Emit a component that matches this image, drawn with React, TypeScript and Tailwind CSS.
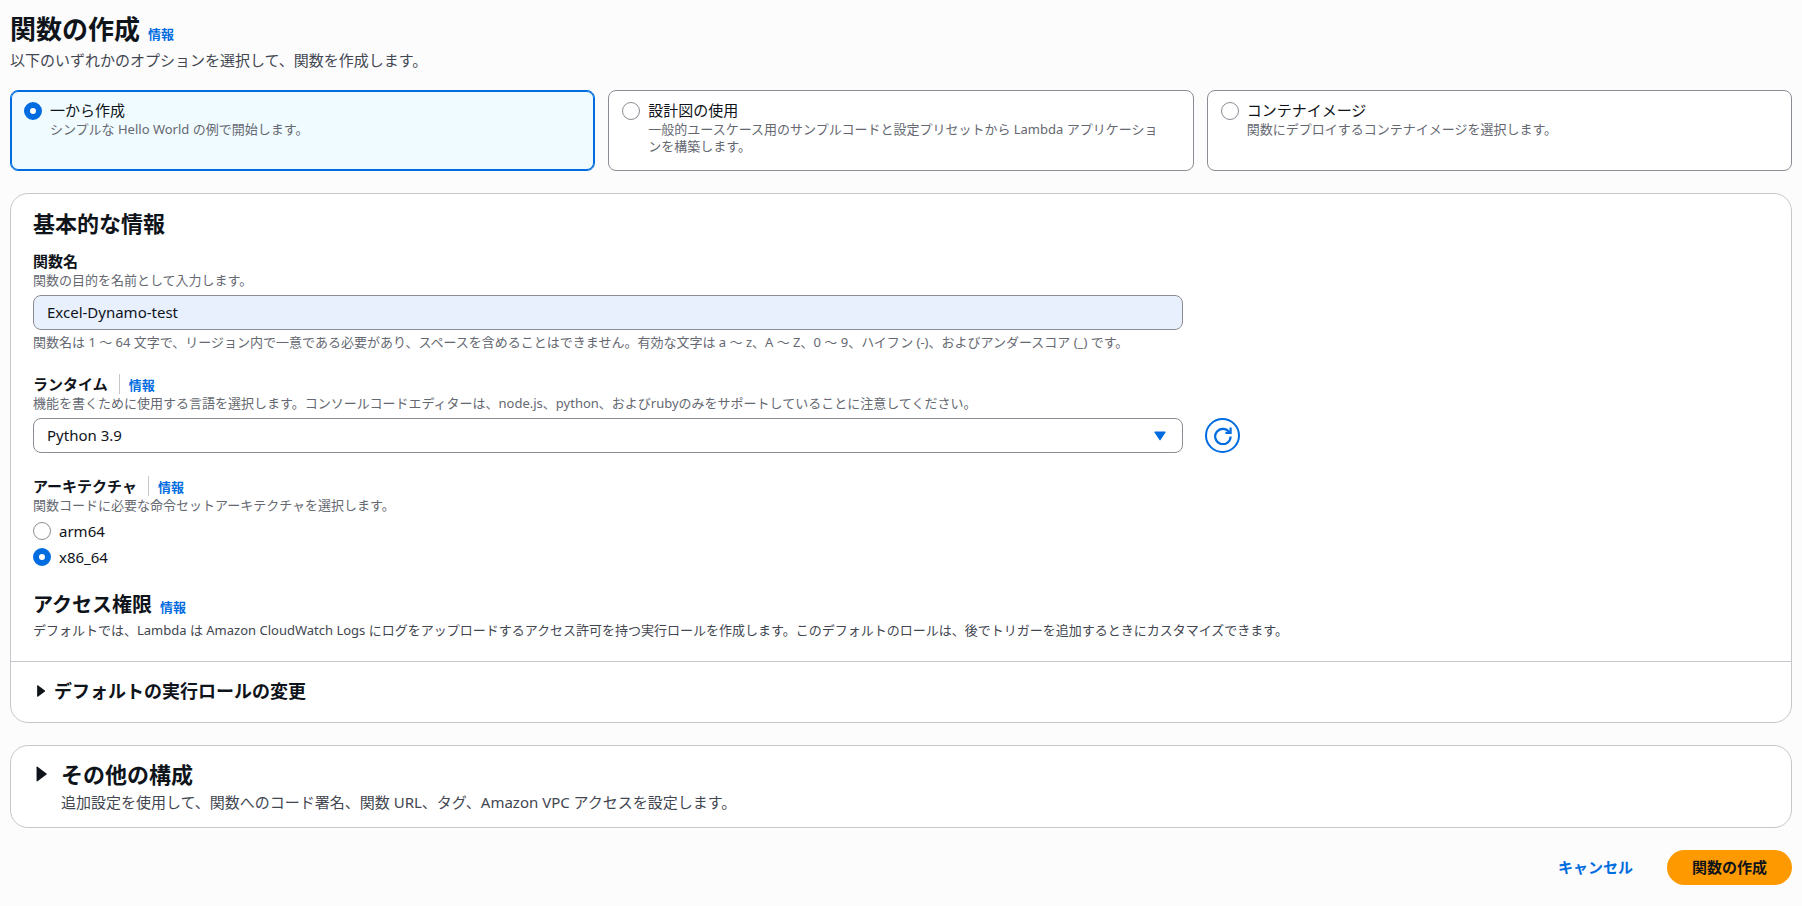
import { useState } from "react";

function InfoLink({ divided = false }: { divided?: boolean }) {
  return (
    <span
      className={
        divided
          ? "ml-[11px] border-l border-[#c6c6cd] pl-[9px] leading-none"
          : "ml-2 text-[13px] leading-none"
      }
    >
      <a href="#info" className="text-[13px] leading-none font-bold text-[#006ce0]">
        情報
      </a>
    </span>
  );
}

function Caret({ className }: { className: string }) {
  return (
    <svg viewBox="0 0 10 14" className={className} fill="currentColor" aria-hidden="true">
      <path d="M0.5 0.8v12.4c0 .5.5.7.9.4l8.1-6.1c.3-.3.3-.7 0-1L1.4.4C1 .1.5.3.5.8z" />
    </svg>
  );
}

const radioClass =
  "h-[18px] w-[18px] shrink-0 appearance-none rounded-full border border-[#8c8c94] bg-white checked:border-[6px] checked:border-[#006ce0]";

export default function App() {
  const options = [
    {
      id: "scratch",
      label: "一から作成",
      description: "シンプルな Hello World の例で開始します。",
    },
    {
      id: "blueprint",
      label: "設計図の使用",
      description:
        "一般的ユースケース用のサンプルコードと設定プリセットから Lambda アプリケーションを構築します。",
    },
    {
      id: "container",
      label: "コンテナイメージ",
      description: "関数にデプロイするコンテナイメージを選択します。",
    },
  ];
  const architectures = ["arm64", "x86_64"];
  const [option, setOption] = useState("scratch");
  const [arch, setArch] = useState("x86_64");
  const [name, setName] = useState("Excel-Dynamo-test");

  return (
    <main
      lang="ja"
      className="min-h-screen bg-[#fcfcfd] px-[10px] pt-3 pb-5 font-['Noto_Sans','Noto_Sans_CJK_JP',sans-serif] text-[15px] leading-[22px] text-[#0f141a]"
    >
      <h1 className="text-[26px] leading-[34px] font-bold">
        関数の作成
        <InfoLink />
      </h1>
      <p className="mt-[3px] text-[#424650]">
        以下のいずれかのオプションを選択して、関数を作成します。
      </p>

      <div className="mt-[19px] grid grid-cols-3 gap-[13px]">
        {options.map((item) => (
          <label
            key={item.id}
            className="flex gap-2 rounded-lg border border-[#8c8c94] bg-white pt-2 pr-6 pb-[15px] pl-[13px] has-checked:border-[#006ce0] has-checked:bg-[#f0fbff] has-checked:inset-ring has-checked:inset-ring-[#006ce0]"
          >
            <input
              type="radio"
              name="option"
              checked={option === item.id}
              onChange={() => setOption(item.id)}
              className={`mt-[3px] ${radioClass}`}
            />
            <span>
              <span className="block">{item.label}</span>
              <span className="block text-[13px] leading-[17px] text-[#656871]">
                {item.description}
              </span>
            </span>
          </label>
        ))}
      </div>

      <section className="mt-[22px] rounded-[18px] border border-[#c6c6cd] bg-white">
        <div className="px-[22px] pt-[15px] pb-[22px]">
          <h2 className="text-[22px] leading-[28px] font-bold">基本的な情報</h2>

          <div className="mt-[13px] grid grid-cols-3 gap-[22px]">
            <div className="col-span-2">
              <label htmlFor="name" className="block font-bold">
                関数名
              </label>
              <p className="text-[13px] leading-[17px] text-[#656871]">
                関数の目的を名前として入力します。
              </p>
              <input
                id="name"
                type="text"
                value={name}
                onChange={(e) => setName(e.target.value)}
                className="mt-[6px] block h-[35px] w-full rounded-lg border border-[#8c8c94] bg-[#e8f0fe] px-[13px] pb-[2px]"
              />
              <p className="mt-[3px] text-[13px] leading-[18px] text-[#656871]">
                関数名は 1 〜 64 文字で、リージョン内で一意である必要があり、スペースを含めることはできません。有効な文字は a 〜 z、A 〜 Z、0 〜 9、ハイフン (-)、およびアンダースコア (_) です。
              </p>
            </div>

            <div className="col-span-2 col-start-1">
              <div className="font-bold">
                <label htmlFor="runtime">ランタイム</label>
                <InfoLink divided />
              </div>
              <p className="text-[13px] leading-[17px] text-[#656871]">
                機能を書くために使用する言語を選択します。コンソールコードエディターは、node.js、python、およびrubyのみをサポートしていることに注意してください。
              </p>
              <div className="relative mt-[6px]">
                <select
                  id="runtime"
                  className="block h-[35px] w-full appearance-none rounded-lg border border-[#8c8c94] bg-white px-[13px] pb-[2px]"
                >
                  <option>Python 3.9</option>
                </select>
                <svg
                  viewBox="0 0 12 10"
                  className="pointer-events-none absolute top-[13px] right-[17px] h-[10px] w-3 text-[#006ce0]"
                  fill="currentColor"
                  aria-hidden="true"
                >
                  <path d="M1 .5h10c.6 0 .8.5.5.9l-5 7.7c-.2.4-.7.4-1 0L.5 1.4C.2 1 .4.5 1 .5z" />
                </svg>
              </div>
            </div>
            <button
              type="button"
              aria-label="更新"
              className="flex h-[35px] w-[35px] items-center justify-center self-end rounded-full border-2 border-[#006ce0] text-[#006ce0]"
            >
              <svg
                viewBox="0 0 18 18"
                className="h-[18px] w-[18px]"
                fill="none"
                stroke="currentColor"
                strokeWidth="2.2"
                aria-hidden="true"
              >
                <path d="M16.6 9.6A7.7 7.7 0 1 1 15.3 5.2" />
                <path d="M11.4 5.9h5.2V.6" />
              </svg>
            </button>
          </div>

          <fieldset className="mt-[22px]">
            <legend className="font-bold">
              アーキテクチャ
              <InfoLink divided />
            </legend>
            <p className="text-[13px] leading-[17px] text-[#656871]">
              関数コードに必要な命令セットアーキテクチャを選択します。
            </p>
            <div className="mt-[6px] flex flex-col gap-1">
              {architectures.map((item) => (
                <label key={item} className="flex items-center gap-2">
                  <input
                    type="radio"
                    name="arch"
                    checked={arch === item}
                    onChange={() => setArch(item)}
                    className={radioClass}
                  />
                  {item}
                </label>
              ))}
            </div>
          </fieldset>

          <h3 className="mt-6 text-[20px] leading-[26px] font-bold">
            アクセス権限
            <InfoLink />
          </h3>
          <p className="mt-[3px] text-[13px] leading-[18px] text-[#424650]">
            デフォルトでは、Lambda は Amazon CloudWatch Logs にログをアップロードするアクセス許可を持つ実行ロールを作成します。このデフォルトのロールは、後でトリガーを追加するときにカスタマイズできます。
          </p>
        </div>

        <div className="border-t border-[#c6c6cd] px-[22px] pt-[17px] pb-[19px]">
          <button
            type="button"
            aria-expanded="false"
            className="flex items-center gap-2 pl-[3px] text-[18px] leading-[24px] font-bold"
          >
            <Caret className="h-3 w-[10px]" />
            デフォルトの実行ロールの変更
          </button>
        </div>
      </section>

      <section className="mt-[22px] rounded-[18px] border border-[#c6c6cd] bg-white px-[22px] py-[14px]">
        <h2>
          <button
            type="button"
            aria-expanded="false"
            className="flex items-center gap-[14px] pl-[3px] text-[22px] leading-[28px] font-bold"
          >
            <Caret className="h-4 w-[11px]" />
            その他の構成
          </button>
        </h2>
        <p className="mt-[3px] pl-7 text-[#424650]">
          追加設定を使用して、関数へのコード署名、関数 URL、タグ、Amazon VPC アクセスを設定します。
        </p>
      </section>

      <div className="mt-[22px] flex justify-end gap-[9px]">
        <button type="button" className="h-[35px] px-[25px] pb-[2px] font-bold text-[#006ce0]">
          キャンセル
        </button>
        <button
          type="button"
          className="h-[35px] rounded-full bg-[#ff9900] px-[25px] pb-[2px] font-bold"
        >
          関数の作成
        </button>
      </div>
    </main>
  );
}
